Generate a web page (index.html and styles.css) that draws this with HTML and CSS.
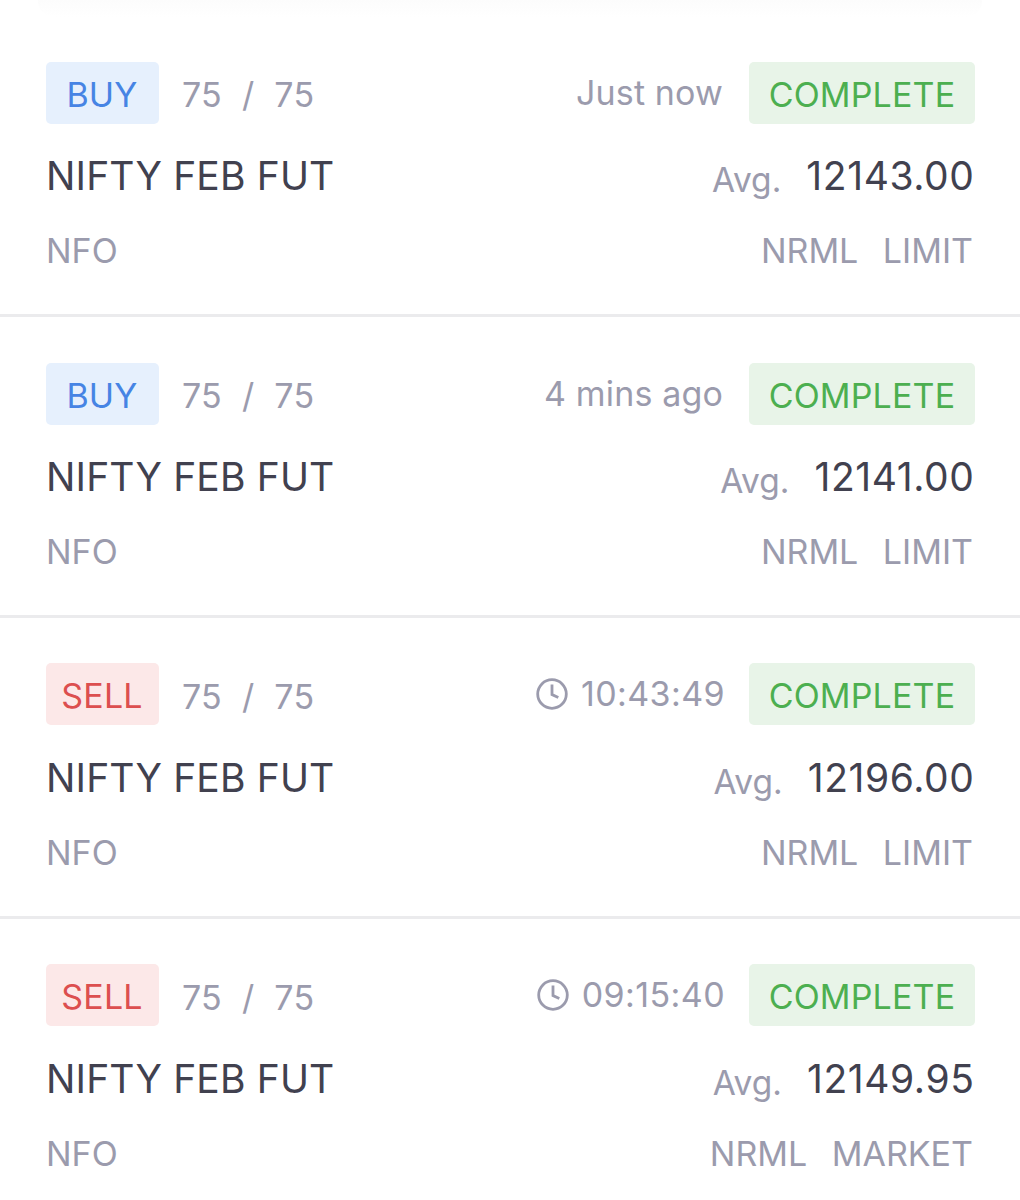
FILE: index.html
```
<!DOCTYPE html>
<html lang="en">
<head>
    <meta charset="UTF-8">
    <meta name="viewport" content="width=device-width, initial-scale=1.0">
    <title>Orders</title>
    <link rel="stylesheet" href="styles.css">
</head>
<body>
    <div class="top-shadow"></div>
    <div class="orders">
        <div class="order">
            <div class="row status-row">
                <span class="badge buy">BUY</span>
                <span class="qty">75 / 75</span>
                <span class="time">Just now</span>
                <span class="badge complete">COMPLETE</span>
            </div>
            <div class="row name-row">
                <span class="name">NIFTY FEB FUT</span>
                <span class="avg">Avg.</span>
                <span class="price">12143.00</span>
            </div>
            <div class="row info-row">
                <span class="exchange">NFO</span>
                <span>NRML</span>
                <span>LIMIT</span>
            </div>
        </div>

        <div class="order">
            <div class="row status-row">
                <span class="badge buy">BUY</span>
                <span class="qty">75 / 75</span>
                <span class="time">4 mins ago</span>
                <span class="badge complete">COMPLETE</span>
            </div>
            <div class="row name-row">
                <span class="name">NIFTY FEB FUT</span>
                <span class="avg">Avg.</span>
                <span class="price">12141.00</span>
            </div>
            <div class="row info-row">
                <span class="exchange">NFO</span>
                <span>NRML</span>
                <span>LIMIT</span>
            </div>
        </div>

        <div class="order">
            <div class="row status-row">
                <span class="badge sell">SELL</span>
                <span class="qty">75 / 75</span>
                <svg class="clock" viewBox="0 0 34 34"><circle cx="17" cy="17" r="14.3"/><path d="M17 7.5v10l6.3 3"/></svg>
                <span class="time">10:43:49</span>
                <span class="badge complete">COMPLETE</span>
            </div>
            <div class="row name-row">
                <span class="name">NIFTY FEB FUT</span>
                <span class="avg">Avg.</span>
                <span class="price">12196.00</span>
            </div>
            <div class="row info-row">
                <span class="exchange">NFO</span>
                <span>NRML</span>
                <span>LIMIT</span>
            </div>
        </div>

        <div class="order">
            <div class="row status-row">
                <span class="badge sell">SELL</span>
                <span class="qty">75 / 75</span>
                <svg class="clock" viewBox="0 0 34 34"><circle cx="17" cy="17" r="14.3"/><path d="M17 7.5v10l6.3 3"/></svg>
                <span class="time">09:15:40</span>
                <span class="badge complete">COMPLETE</span>
            </div>
            <div class="row name-row">
                <span class="name">NIFTY FEB FUT</span>
                <span class="avg">Avg.</span>
                <span class="price">12149.95</span>
            </div>
            <div class="row info-row">
                <span class="exchange">NFO</span>
                <span>NRML</span>
                <span>MARKET</span>
            </div>
        </div>
    </div>
</body>
</html>
```

FILE: styles.css
```
* {
    box-sizing: border-box;
}
body {
    margin: 0;
    height: 1200px;
    overflow: hidden;
    background: #fff;
    color: #9b9bad;
    font-family: Inter, sans-serif;
    font-size: 34px;
    font-weight: 375;
    letter-spacing: 0.15px;
}
.top-shadow {
    height: 16.6px;
    margin: 0 38px;
    border-radius: 0 0 16px 16px;
    background: linear-gradient(#fcfcfc, #fff);
}
.order {
    height: 300.85px;
    padding: 45.2px 45px 0 45.5px;
    border-bottom: 3px solid #ebebed;
}
.order:last-child {
    border-bottom: none;
}
.row {
    display: flex;
    align-items: center;
    white-space: pre;
}
.status-row {
    height: 62px;
}
.badge {
    height: 62px;
    padding-top: 2px;
    border-radius: 5px;
    line-height: 62px;
    text-align: center;
}
.buy,
.sell {
    width: 113px;
}
.buy {
    background: #e6f0fd;
    color: #4684e4;
}
.sell {
    background: #fce8e8;
    color: #dc4f4f;
}
.complete {
    width: 226px;
    margin-left: 26px;
    background: #e8f4e8;
    color: #4caf50;
}
.qty {
    margin-left: 23.5px;
    padding-top: 4px;
    letter-spacing: 0.2px;
    word-spacing: 10.2px;
}
.time {
    margin-left: auto;
}
.clock {
    width: 34px;
    height: 34px;
    margin-left: auto;
    fill: none;
    stroke: #9b9bad;
    stroke-width: 2.8;
}
.clock + .time {
    margin-left: 11.5px;
    margin-right: -2px;
    padding-bottom: 1px;
    letter-spacing: 0.4px;
}
.name-row {
    height: 60px;
    margin-top: 28.2px;
    padding-left: 0.5px;
    align-items: baseline;
    color: #41414f;
    font-size: 39px;
}
.avg {
    margin-left: auto;
    padding-top: 1px;
    align-self: flex-start;
    color: #9b9bad;
    font-size: 33.5px;
    letter-spacing: 0;
    line-height: 54px;
}
.price {
    margin-left: 25px;
    padding-right: 0.5px;
    letter-spacing: 0.6px;
}
.info-row {
    margin-top: 18.3px;
    padding: 0 2px 0 0.5px;
    gap: 24.5px;
    letter-spacing: 0;
}
.exchange {
    margin-right: auto;
}
```
